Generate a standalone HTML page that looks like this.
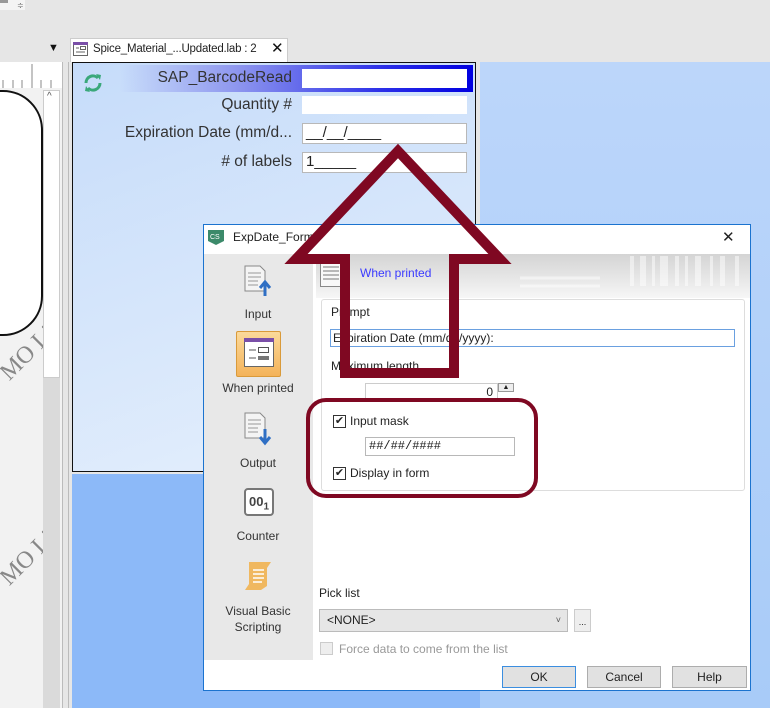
<!DOCTYPE html>
<html><head><meta charset="utf-8"><style>
*{box-sizing:border-box;margin:0;padding:0}
body{width:770px;height:708px;overflow:hidden;background:#e6e6e6;font-family:"Liberation Sans",sans-serif;position:relative;color:#222}
.a{position:absolute}
.lbl{font-size:15.5px;color:#333;text-align:right;width:220px;white-space:nowrap}
.inp{background:#fff;border:1px solid #b8b8b8}
.sb{font-size:12px;color:#333;text-align:center;width:108px;left:204px}
.btn{background:#e1e1e1;border:1px solid #adadad;font-size:12px;text-align:center;line-height:20px;height:22px;top:666px}
.cb{width:13px;height:13px;border:1px solid #333;background:#fff;font-size:11px;line-height:11px;text-align:center}
</style></head><body>
<div class="a" style="left:0;top:0;width:25px;height:10px;background:#f4f4f4"></div>
<div class="a" style="left:0;top:0;width:8px;height:3px;background:#999"></div>
<div class="a" style="left:17px;top:1px;font-size:8px;color:#666">≑</div>
<div class="a" style="left:48px;top:42px;font-size:11px;color:#111">▼</div>
<div class="a" style="left:0;top:62px;width:62px;height:646px;background:#f2f2f2"></div>
<div class="a" style="left:0;top:62px;width:62px;height:26px;background:#fff"></div>
<svg class="a" style="left:0;top:62px" width="62" height="30"><g stroke="#888" stroke-width="1"><line x1="32" y1="2" x2="32" y2="26"/><line x1="3" y1="18" x2="3" y2="26"/><line x1="13" y1="18" x2="13" y2="26"/><line x1="22" y1="18" x2="22" y2="26"/><line x1="41" y1="18" x2="41" y2="26"/><line x1="51" y1="18" x2="51" y2="26"/></g></svg>
<div class="a" style="left:-30px;top:90px;width:73px;height:246px;background:#fff;border:2px solid #111;border-radius:0 40px 40px 0"></div>
<div class="a" style="left:-5px;top:340px;font-family:'Liberation Serif',serif;font-size:24px;color:#888;transform:rotate(-45deg)">MO Li</div>
<div class="a" style="left:-5px;top:545px;font-family:'Liberation Serif',serif;font-size:24px;color:#888;transform:rotate(-45deg)">MO Li</div>
<div class="a" style="left:43px;top:90px;width:17px;height:618px;background:#dadada"></div>
<div class="a" style="left:43px;top:90px;width:17px;height:288px;background:#fff;border:1px solid #ccc"></div>
<div class="a" style="left:47px;top:91px;font-size:10px;color:#555">^</div>
<div class="a" style="left:62px;top:62px;width:1px;height:646px;background:#bbb"></div>
<div class="a" style="left:68px;top:62px;width:1px;height:646px;background:#bbb"></div>
<div class="a" style="left:70px;top:38px;width:218px;height:24px;background:#fff;border:1px solid #ccc;border-bottom:none"></div>
<svg class="a" style="left:73px;top:42px" width="15" height="14"><rect x="0.5" y="0.5" width="14" height="13" fill="#fff" stroke="#666"/><rect x="0" y="0" width="15" height="3" fill="#7a4fa8"/><line x1="3" y1="6" x2="6" y2="6" stroke="#666"/><rect x="7.5" y="4.5" width="5" height="3" fill="none" stroke="#666"/><line x1="3" y1="10" x2="12" y2="10" stroke="#666"/></svg>
<div class="a" style="left:93px;top:43px;font-size:11.5px;color:#222;letter-spacing:-0.2px">Spice_Material_...Updated.lab : 2</div>
<div class="a" style="left:271px;top:39px;font-size:15px;color:#111">✕</div>
<div class="a" style="left:72px;top:62px;width:404px;height:410px;background:linear-gradient(160deg,#c6dcfa,#e6f0fc);border:1px solid #111"></div>
<div class="a" style="left:480px;top:62px;width:290px;height:646px;background:linear-gradient(180deg,#bcd6fa,#a8cbf8)"></div>
<div class="a" style="left:72px;top:474px;width:408px;height:234px;background:#8cb9f8"></div>
<div class="a" style="left:120px;top:65px;width:353px;height:27px;background:linear-gradient(90deg,rgba(140,150,240,0),#8a92ee 35%,#2a2ee8 75%,#0000e0)"></div>
<svg class="a" style="left:82px;top:72px" width="22" height="22" viewBox="0 0 22 22"><path d="M4 11a7 7 0 0 1 12-5" fill="none" stroke="#3aa87a" stroke-width="3"/><path d="M18 11a7 7 0 0 1-12 5" fill="none" stroke="#3aa87a" stroke-width="3"/><path d="M14 2l5 1-1 5z" fill="#3aa87a"/><path d="M8 20l-5-1 1-5z" fill="#3aa87a"/></svg>
<div class="a lbl" style="left:72px;top:69px">SAP_BarcodeRead</div>
<div class="a lbl" style="left:72px;top:96px">Quantity #</div>
<div class="a lbl" style="left:72px;top:124px">Expiration Date (mm/d...</div>
<div class="a lbl" style="left:72px;top:153px"># of labels</div>
<div class="a" style="left:302px;top:69px;width:165px;height:19px;background:#fff"></div>
<div class="a" style="left:302px;top:96px;width:165px;height:18px;background:#fff"></div>
<div class="a inp" style="left:302px;top:123px;width:165px;height:21px;font-size:15px;padding-left:3px">__/__/____</div>
<div class="a inp" style="left:302px;top:152px;width:165px;height:21px;font-size:15px;padding-left:3px">1_____</div>
<div class="a" style="left:203px;top:224px;width:548px;height:467px;background:#fff;border:1px solid #1b73cf"></div>
<svg class="a" style="left:207px;top:229px" width="18" height="17"><path d="M1 1h16v11l-8 4-8-4z" fill="#3c8a6a"/><text x="3" y="10" font-size="7" fill="#fff" font-family="Liberation Sans">CS</text></svg>
<div class="a" style="left:233px;top:230px;font-size:12px">ExpDate_Form</div>
<div class="a" style="left:722px;top:228px;font-size:15px;color:#222">✕</div>
<div class="a" style="left:204px;top:254px;width:109px;height:406px;background:#e8e8e8"></div>
<div class="a" style="left:316px;top:254px;width:434px;height:44px;background:linear-gradient(180deg,#d4d4d4,#f6f6f6)"></div>
<svg class="a" style="left:500px;top:256px" width="250" height="40" opacity="0.5"><g fill="#fff"><rect x="130" y="0" width="4" height="30"/><rect x="140" y="0" width="6" height="30"/><rect x="152" y="0" width="3" height="30"/><rect x="160" y="0" width="8" height="30"/><rect x="175" y="0" width="4" height="30"/><rect x="185" y="0" width="3" height="30"/><rect x="195" y="0" width="6" height="30"/><rect x="210" y="0" width="3" height="30"/><rect x="220" y="0" width="5" height="30"/><rect x="235" y="0" width="4" height="30"/></g><path d="M20 22h80M20 30h80" stroke="#fff" stroke-width="3"/></svg>
<svg class="a" style="left:320px;top:262px" width="24" height="26"><rect x="0.5" y="0.5" width="22" height="24" fill="#f8f8f8" stroke="#888"/><g stroke="#777"><line x1="3" y1="5" x2="19" y2="5"/><line x1="3" y1="9" x2="19" y2="9"/><line x1="3" y1="13" x2="19" y2="13"/><line x1="3" y1="17" x2="19" y2="17"/></g></svg>
<div class="a" style="left:360px;top:266px;font-size:12px;color:#3a3aff">When printed</div>
<svg class="a" style="left:244px;top:265px" width="30" height="32"><path d="M1 1h15l5 5v20H1z" fill="#f4f4f4" stroke="#888"/><g stroke="#999"><line x1="4" y1="8" x2="17" y2="8"/><line x1="4" y1="12" x2="17" y2="12"/><line x1="4" y1="16" x2="14" y2="16"/><line x1="4" y1="20" x2="14" y2="20"/></g><path d="M21 31V18M16 23l5-6 5 6" fill="none" stroke="#2f6fc4" stroke-width="3"/></svg>
<div class="a sb" style="top:307px">Input</div>
<div class="a" style="left:236px;top:331px;width:45px;height:46px;background:linear-gradient(180deg,#fbd99a,#f4b35a);border:1px solid #d99a3a;border-radius:2px"></div>
<svg class="a" style="left:244px;top:338px" width="30" height="30"><rect x="0.5" y="0.5" width="29" height="28" fill="#fff" stroke="#666"/><rect x="0" y="0" width="30" height="4" fill="#7a4fa8"/><line x1="5" y1="12" x2="12" y2="12" stroke="#555"/><rect x="14.5" y="9.5" width="10" height="5" fill="none" stroke="#555"/><line x1="5" y1="20" x2="12" y2="20" stroke="#555"/><rect x="14" y="18" width="11" height="4" fill="#777"/></svg>
<div class="a sb" style="top:381px">When printed</div>
<svg class="a" style="left:244px;top:412px" width="30" height="34"><path d="M1 1h15l5 5v20H1z" fill="#f4f4f4" stroke="#888"/><g stroke="#999"><line x1="4" y1="8" x2="17" y2="8"/><line x1="4" y1="12" x2="17" y2="12"/><line x1="4" y1="16" x2="14" y2="16"/><line x1="4" y1="20" x2="14" y2="20"/></g><path d="M21 17v13M16 25l5 6 5-6" fill="none" stroke="#2f6fc4" stroke-width="3"/></svg>
<div class="a sb" style="top:456px">Output</div>
<div class="a" style="left:244px;top:488px;width:30px;height:28px;border:2px solid #777;border-radius:4px;background:#fff;font-size:13px;font-weight:bold;color:#444;text-align:center;line-height:24px">00<sub style="font-size:10px">1</sub></div>
<div class="a sb" style="top:529px">Counter</div>
<svg class="a" style="left:243px;top:560px" width="32" height="32"><path d="M6 2h22l-4 6v18l-6 4H2l4-6V8z" fill="#f0b860"/><g stroke="#fff" stroke-width="1.5"><line x1="10" y1="10" x2="21" y2="10"/><line x1="10" y1="14" x2="21" y2="14"/><line x1="10" y1="18" x2="21" y2="18"/><line x1="10" y1="22" x2="19" y2="22"/></g></svg>
<div class="a sb" style="top:603px;line-height:16px">Visual Basic<br>Scripting</div>
<div class="a" style="left:321px;top:299px;width:424px;height:192px;border:1px solid #ddd;border-radius:3px"></div>
<div class="a" style="left:331px;top:305px;font-size:12px">Prompt</div>
<div class="a" style="left:330px;top:329px;width:405px;height:18px;border:1px solid #6aa0e0;font-size:12px;padding-left:2px;line-height:16px">Expiration Date (mm/dd/yyyy):</div>
<div class="a" style="left:331px;top:359px;font-size:12px">Maximum length</div>
<div class="a inp" style="left:365px;top:383px;width:133px;height:18px;font-size:12px;text-align:right;padding-right:4px;line-height:16px;border-color:#ccc">0</div>
<div class="a" style="left:498px;top:383px;width:16px;height:9px;border:1px solid #999;background:#eee;font-size:7px;text-align:center;line-height:7px">▲</div>
<div class="a cb" style="left:333px;top:415px">✔</div>
<div class="a" style="left:350px;top:414px;font-size:12px">Input mask</div>
<div class="a inp" style="left:365px;top:437px;width:150px;height:19px;font-family:'Liberation Mono',monospace;font-size:12px;padding-left:3px;line-height:17px">##/##/####</div>
<div class="a cb" style="left:333px;top:467px">✔</div>
<div class="a" style="left:350px;top:466px;font-size:12px">Display in form</div>
<div class="a" style="left:319px;top:586px;font-size:12px">Pick list</div>
<div class="a" style="left:319px;top:609px;width:249px;height:23px;background:#e6e6e6;border:1px solid #bbb;font-size:12px;padding-left:7px;line-height:21px">&lt;NONE&gt;<span style="position:absolute;right:6px;font-size:9px;color:#555">˅</span></div>
<div class="a" style="left:574px;top:609px;width:17px;height:23px;background:#eee;border:1px solid #ccc;font-size:9px;text-align:center;line-height:24px">...</div>
<div class="a" style="left:320px;top:642px;width:13px;height:13px;border:1px solid #ccc;background:#eee"></div>
<div class="a" style="left:339px;top:642px;font-size:12px;color:#999">Force data to come from the list</div>
<div class="a btn" style="left:502px;width:74px;border-color:#3b8ee0">OK</div>
<div class="a btn" style="left:587px;width:74px">Cancel</div>
<div class="a btn" style="left:672px;width:75px">Help</div>
<svg class="a" style="left:0;top:0" width="770" height="708"><polygon points="398,151 500,259 454,259 454,373 345,373 345,259 296,259" fill="none" stroke="#7f0822" stroke-width="10" stroke-linejoin="miter"/><rect x="308" y="400" width="228" height="96" rx="18" fill="none" stroke="#7f0822" stroke-width="4"/></svg>
</body></html>
